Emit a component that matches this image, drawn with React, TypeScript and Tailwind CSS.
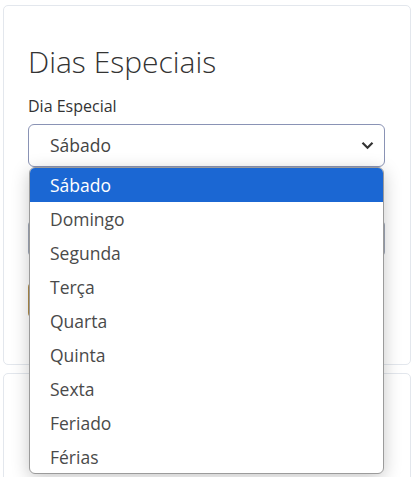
import React from "react";

const items = ["Sábado", "Domingo", "Segunda", "Terça", "Quarta", "Quinta", "Sexta", "Feriado", "Férias"];

export default function App() {
  return (
    <div
      className="relative w-[414px] h-[477px] overflow-hidden bg-white"
      style={{ fontFamily: '"Open Sans", "Noto Sans", sans-serif' }}
    >
      <div className="px-[3px] pt-[5px]">
        <div className="h-[360px] border border-[#e3e7ed] rounded-[5px] pl-[24px] pr-[25px] pt-[38px]">
          <h2 className="text-[30px] leading-[36px] font-light text-[#333]">Dias Especiais</h2>
          <label className="block mt-[14px] text-[16px] leading-[24px] text-[#333]">Dia Especial</label>
          <div className="mt-[6px] h-[43px] border border-[#8a93b5] rounded-[6px] flex items-center justify-between pl-[21px] pr-[10px] text-[17.5px] text-[#444]">
            <span>Sábado</span>
            <svg width="13" height="9" viewBox="0 0 13 9" fill="none">
              <path d="M1.5 1.8 L6.5 6.8 L11.5 1.8" stroke="#333" strokeWidth="2.2" />
            </svg>
          </div>
          <div className="mt-[53px] h-[37px] border border-[#a0a8b8] rounded-[5px]" />
          <div className="mt-[25px] h-[36px] w-[120px] bg-[#b08d4a] rounded-[5px]" />
        </div>
        <div className="mt-[8px] h-[200px] border border-[#e3e7ed] rounded-[5px] pl-[28px] pr-[25px] pt-[100px]">
          <label className="block text-[16px] leading-[24px] text-[#333]">Tipo de Diminuição</label>
        </div>
      </div>

      <div className="absolute left-[29px] top-[167px] w-[355px] h-[307px] bg-white border border-[#9b9b9b] rounded-[6px] overflow-hidden shadow-[0_4px_18px_rgba(0,0,0,0.22)]">
        {items.map((it, i) => (
          <div
            key={it}
            className={
              i === 0
                ? "h-[34px] leading-[34px] pl-[20px] text-[17.5px] bg-[#1b67d3] text-white"
                : "h-[34px] leading-[34px] pl-[20px] text-[17.5px] text-[#4a4a4a]"
            }
          >
            {it}
          </div>
        ))}
      </div>
    </div>
  );
}
